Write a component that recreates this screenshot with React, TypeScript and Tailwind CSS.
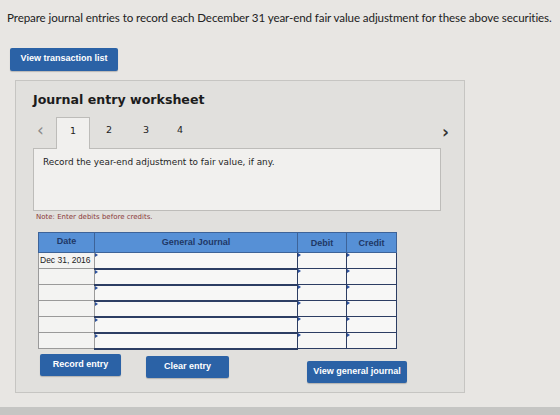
import React from "react";

const rows = [
  { date: "Dec 31, 2016" },
  { date: "" },
  { date: "" },
  { date: "" },
  { date: "" },
  { date: "" },
];

function Marker() {
  // small dropdown marker in the corner of each editable cell
  return (
    <span className="absolute left-0 top-0 h-0 w-0 border-y-[2px] border-l-[3px] border-y-transparent border-l-[#2a4f9a]" />
  );
}

function BlueButton({ label, className }: { label: string; className?: string }) {
  return (
    <button
      className={
        "h-[22px] rounded-[2px] bg-[#2b62a6] font-['Liberation_Sans',sans-serif] text-[9px] font-bold text-white shadow-[0_1px_1px_rgba(0,0,0,0.2)] " +
        (className || "")
      }
    >
      {label}
    </button>
  );
}

export default function App() {
  return (
    <div className="relative flex h-[415px] w-[560px] flex-col overflow-hidden bg-[#e8e6e3] font-['Lato',sans-serif] text-[#222]">
      <p className="whitespace-nowrap pl-[7px] pt-[9px] text-[11.6px] tracking-[-0.1px]">
        Prepare journal entries to record each December 31 year-end fair value adjustment for these above securities.
      </p>

      <div className="ml-[10px] mt-[17px]">
        <BlueButton label="View transaction list" className="h-[23px] w-[108px]" />
      </div>

      <div className="ml-[15px] mt-[9px] h-[313px] w-[450px] border border-[#c6c5c2] bg-[#e1e0dd] pl-[17px] pr-[23px] pt-[10px] font-['DejaVu_Sans',sans-serif]">
        <h2 className="text-[12.6px] font-bold text-[#1c1c1c]">Journal entry worksheet</h2>

        {/* step tabs */}
        <div className="mt-[7px] flex h-[31px] items-stretch text-[9.5px]">
          <span className="ml-[4px] flex w-[19px] items-center pb-[4px] text-[17px] leading-none text-[#8a8a8a]">&lsaquo;</span>
          <div className="relative z-10 -mb-px flex w-[34px] items-center justify-center border border-b-0 border-[#bdbcb9] bg-[#f1f0ee] pb-[3px]">
            1
          </div>
          <span className="ml-[16px] flex items-center pb-[3px]">2</span>
          <span className="ml-[31px] flex items-center pb-[3px]">3</span>
          <span className="ml-[28px] flex items-center pb-[3px]">4</span>
          <span className="ml-auto mr-[-8px] flex items-center text-[17px] font-bold leading-none text-[#333]">&rsaquo;</span>
        </div>

        <div className="h-[63px] border border-[#bdbcb9] bg-[#f1f0ee] px-[9px] pt-[7px] text-[8.9px] text-[#1e1e1e]">
          Record the year-end adjustment to fair value, if any.
        </div>

        <p className="mt-[1px] pl-[3px] text-[7px] text-[#8b3a3a]">Note: Enter debits before credits.</p>

        {/* journal grid */}
        <table className="ml-[5px] mt-[10px] w-[359px] table-fixed border-collapse font-['Liberation_Sans',sans-serif] text-[9px]">
          <thead>
            <tr className="h-[20px] bg-[#5690d6] text-[#1f3866]">
              <th className="w-[56px] border border-[#3d6398] pb-[2px] font-bold">Date</th>
              <th className="w-[203px] border border-[#3d6398] font-bold">General Journal</th>
              <th className="w-[49px] border border-[#3d6398] pt-[3px] font-bold">Debit</th>
              <th className="border border-[#3d6398] pt-[3px] font-bold">Credit</th>
            </tr>
          </thead>
          <tbody>
            {rows.map((r, i) => (
              <tr key={i} className="h-[16px]">
                <td className="whitespace-nowrap border border-[#9a9a9a] bg-[#f3f3f2] px-[1px] text-[8.5px] text-[#222]">{r.date}</td>
                <td className="relative border-x border-b-2 border-t border-[#2c3d63] bg-[#f7f7f6]">
                  <Marker />
                </td>
                <td className="relative border border-[#2c3d63] bg-[#f7f7f6]">
                  <Marker />
                </td>
                <td className="relative border border-[#2c3d63] bg-[#f7f7f6]">
                  <Marker />
                </td>
              </tr>
            ))}
          </tbody>
        </table>

        <div className="mt-[4px] flex items-start">
          <BlueButton label="Record entry" className="ml-[7px] w-[81px]" />
          <BlueButton label="Clear entry" className="ml-[25px] mt-[2px] w-[83px]" />
          <BlueButton label="View general journal" className="ml-[78px] mt-[7px] w-[100px]" />
        </div>
      </div>

      <div className="mt-auto h-[8px] bg-[#c5c5c3]" />
    </div>
  );
}
